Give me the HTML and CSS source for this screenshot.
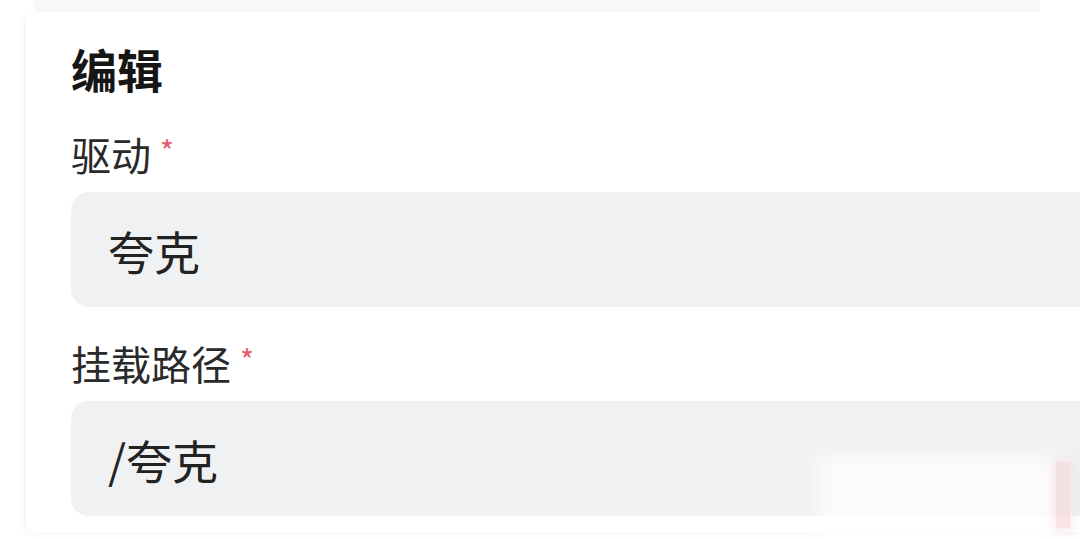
FILE: index.html
```html
<!DOCTYPE html>
<html lang="zh-CN">
<head>
<meta charset="utf-8">
<title>编辑</title>
<link rel="stylesheet" href="styles.css">
</head>
<body>
<div class="page">
  <div class="strip"></div>
  <section class="card">
    <h2 class="title">编辑</h2>
    <div class="field">
      <label class="label">驱动 <span class="req">*</span></label>
      <div class="input">夸克</div>
    </div>
    <div class="field">
      <label class="label">挂载路径 <span class="req">*</span></label>
      <div class="input">/夸克</div>
    </div>
  </section>
  <div class="haze"></div>
  <div class="haze-tint"></div>
</div>
</body>
</html>
```
FILE: styles.css
```css
html, body {
  margin: 0;
  padding: 0;
  background: #ffffff;
}

body {
  font-family: "Noto Sans CJK SC", "Noto Sans", sans-serif;
  color: #1f1f1f;
  overflow: hidden;
  width: 1080px;
  height: 539px;
}

.page {
  position: relative;
  height: 539px;
}

/* faint edge of the panel above */
.strip {
  height: 12px;
  margin: 0 40px 0 34px;
  background: #f8f8f8;
}

.card {
  margin-left: 24px;
  margin-right: -40px;
  padding: 24px 0 16px 46px;
  border-left: 1px solid #f1f1f1;
  border-radius: 12px 0 0 12px;
  box-shadow: -2px 3px 6px rgba(0, 0, 0, 0.03);
  background: #fff;
}

.title {
  margin: 0;
  font-size: 46px;
  font-weight: 700;
  line-height: 64px;
  color: #161616;
}

.field {
  margin-top: 26px;
}

.field + .field {
  margin-top: 28px;
}

.label {
  display: block;
  height: 56px;
  font-size: 40px;
  line-height: 56px;
  color: #2a2a2a;
}

.req {
  color: #e35d6a;
  font-size: 30px;
  line-height: 0;
  vertical-align: 8px;
}

.input {
  margin-top: 10px;
  height: 115px;
  padding-left: 37px;
  display: flex;
  align-items: center;
  background: #f0f1f3;
  border-radius: 18px 0 0 18px;
  font-size: 46px;
  color: #222;
}

/* soft white wash over the lower right corner */
.haze {
  position: absolute;
  left: 830px;
  top: 468px;
  width: 220px;
  height: 70px;
  background: rgba(255, 255, 255, 0.7);
  box-shadow: 0 0 18px 14px rgba(255, 255, 255, 0.7);
}

.haze-tint {
  position: absolute;
  left: 1056px;
  top: 462px;
  width: 14px;
  height: 66px;
  background: rgba(242, 205, 210, 0.55);
  box-shadow: 0 0 8px 4px rgba(242, 205, 210, 0.35);
}
```
